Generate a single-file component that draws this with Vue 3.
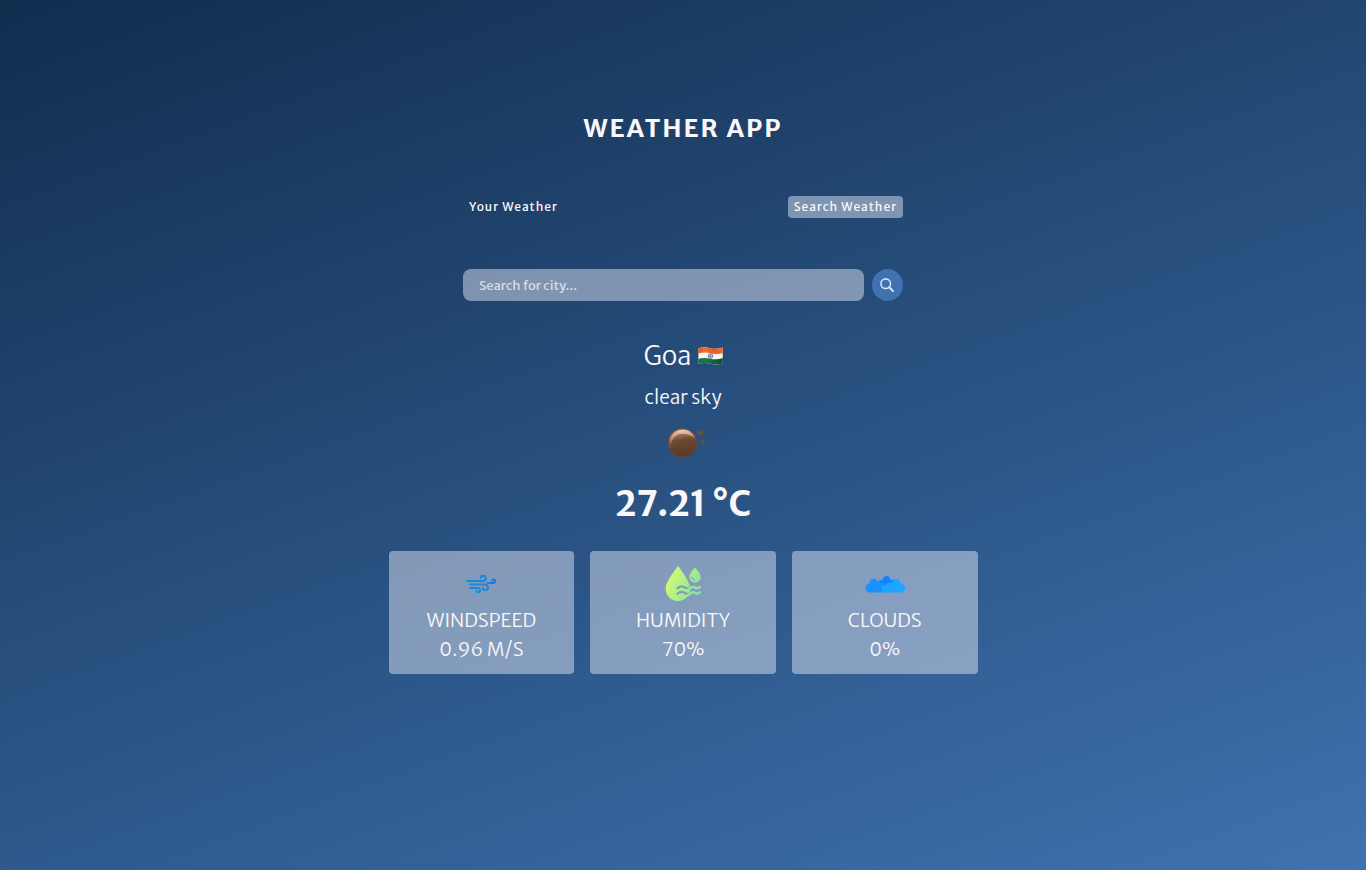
<script setup>
import { ref } from 'vue'

const city = ref('')
const tab = ref('search')
const tabs = [
  { id: 'your', label: 'Your Weather' },
  { id: 'search', label: 'Search Weather' },
]
</script>

<template>
  <main class="wrapper">
    <h1>WEATHER APP</h1>
    <nav class="tabs">
      <button
        v-for="t in tabs"
        :key="t.id"
        type="button"
        class="tab"
        :class="{ current: tab === t.id }"
        @click="tab = t.id"
      >{{ t.label }}</button>
    </nav>
    <form class="search" @submit.prevent>
      <input v-model="city" type="text" aria-label="Search for city" placeholder="Search for city..." />
      <button type="submit" aria-label="Search">
        <svg width="15" height="14" viewBox="0 0 15 14" fill="none" stroke="#dbe2ef" aria-hidden="true">
          <circle cx="5.7" cy="5.7" r="4.8" stroke-width="1.6" />
          <path d="M9.3 9.3 13 13" stroke-width="2" stroke-linecap="round" />
        </svg>
      </button>
    </form>

    <section class="info">
      <div class="name">
        <p>Goa</p>
        <svg width="25" height="20" viewBox="0 0 25 20" role="img" aria-label="India">
          <defs>
            <clipPath id="flagShape">
              <path d="M.4 2.200C4 .8 8.500 1.200 12.500 2.200S20.500 2.900 24.700 1.600V17.300C20.500 19 16.500 18.600 12.500 17.700S4.500 16.600 .4 18Z" />
            </clipPath>
            <linearGradient id="flagTop"><stop stop-color="#e35420" /><stop offset=".3" stop-color="#f36c33" /><stop offset=".6" stop-color="#e85a1c" /><stop offset="1" stop-color="#f4692a" /></linearGradient>
            <linearGradient id="flagBase"><stop stop-color="#17693c" /><stop offset=".3" stop-color="#1c7846" /><stop offset="1" stop-color="#0b4d27" /></linearGradient>
          </defs>
          <g clip-path="url(#flagShape)">
            <rect width="25" height="20" fill="#f6f4f5" />
            <path d="M0 0H25V7C20.500 8.200 16.500 8.100 12.500 7.200S4.500 6.200 0 7.500Z" fill="url(#flagTop)" />
            <path d="M0 13C4.500 11.700 8.500 11.900 12.500 12.800S20.500 13.500 25 12.100V20H0Z" fill="url(#flagBase)" />
          </g>
          <circle cx="12.500" cy="10" r="2.300" fill="#c6c6df" stroke="#625e9a" stroke-width=".8" />
          <circle cx="12.500" cy="10" r=".8" fill="#50508c" />
        </svg>
      </div>
      <p class="desc">clear sky</p>
      <svg class="moon" width="50" height="50" viewBox="0 0 50 50" role="img" aria-label="Clear night">
        <defs>
          <linearGradient id="moonFill" x1=".35" y1="0" x2=".5" y2="1">
            <stop offset="0" stop-color="#b38163" />
            <stop offset=".25" stop-color="#9a6849" />
            <stop offset=".4" stop-color="#6c4931" />
            <stop offset="1" stop-color="#583a27" />
          </linearGradient>
          <linearGradient id="moonShine" x1=".4" y1="0" x2=".5" y2="1">
            <stop offset="0" stop-color="#f1cfbd" />
            <stop offset=".45" stop-color="#c39a82" stop-opacity=".7" />
            <stop offset="1" stop-color="#805638" stop-opacity="0" />
          </linearGradient>
          <filter id="moonSoft"><feGaussianBlur stdDeviation=".6" /></filter>
        </defs>
        <circle cx="24.500" cy="25" r="15" fill="#584a49" />
        <circle cx="24.500" cy="25" r="14" fill="url(#moonFill)" />
        <path d="M12.500 32C9 21 15 12 25 11.700 31 12 35.500 15.500 37 20.500 31 15.500 27 16 22 16 16 17 12.500 23 12.500 32Z" fill="url(#moonShine)" filter="url(#moonSoft)" />
        <path d="m42.300 11 1.200 2.500 2.900.1-2.200 2 .9 2.800-2.800-1.500-2.800 1.500.8-2.800-2.100-2.100 2.800-.1ZM44.700 20.500l.9 2.200 2.500.1-1.800 1.700.7 2.400-2.300-1.200-2.200 1.200.5-2.500-1.800-1.700 2.500-.1Z" fill="#66503f" />
      </svg>
      <p class="temp">27.21 °C</p>
    </section>

    <section class="cards">
      <div class="card">
        <svg width="40" height="40" viewBox="0 0 40 40" fill="none" stroke-width="2" stroke-linecap="round" aria-hidden="true">
          <defs>
            <linearGradient id="wind" gradientUnits="userSpaceOnUse" x1="4" x2="35" y1="20" y2="20">
              <stop stop-color="#0794d8" /><stop offset=".45" stop-color="#168bdc" /><stop offset="1" stop-color="#2774d3" />
            </linearGradient>
          </defs>
          <g stroke="url(#wind)">
            <path d="M6 17.100H21.500C26 17.100 25.600 11.700 22.300 11.700 20.400 11.700 19.500 12.800 19.900 14" />
            <path d="M8.500 20.600H23.500C28.700 20.600 27.700 26.500 24 26.200 22.300 26.100 21.700 25 22 23.900" />
            <path d="M9 24H16.500C20 24 19.700 28.200 17.400 28.200 16.100 28.200 15.500 27.400 15.700 26.600" />
            <path d="M26.500 19.100H31.600C35.300 19.100 34.700 15.500 32.600 15.500 31.400 15.500 30.800 16.200 31.100 17" />
          </g>
        </svg>
        <p>WINDSPEED</p>
        <p>0.96 M/S</p>
      </div>
      <div class="card">
        <svg width="40" height="40" viewBox="0 0 40 40" aria-hidden="true">
          <defs>
            <linearGradient id="wet" gradientUnits="userSpaceOnUse" x1="5" y1="12" x2="37" y2="28">
              <stop stop-color="#d3f970" /><stop offset="1" stop-color="#83e4a3" />
            </linearGradient>
          </defs>
          <path d="M15.200 2C18 6 26.500 17 27.200 23.500 28 31 22 37 15 37S2.600 31.500 2.600 24.500C2.600 18 11 7.500 15.200 2Z" fill="url(#wet)" />
          <g fill="none" stroke="#849bbb" stroke-width="2.300" stroke-linecap="round">
            <path d="M14.500 24.200C17 22 19.300 21.600 22 23.600S26.500 24.300 28.500 22.800M14.500 29.700C17 27.500 19.300 27.100 22 29.100S26.500 29.800 28.500 28.300" />
          </g>
          <path d="M31.800 3.200C34 6.200 37.700 9.500 37.700 13 37.700 16.200 35.200 18.500 32 18.500S26.500 16.200 26.500 13C26.500 9.500 29.800 6.200 31.800 3.200Z" fill="url(#wet)" />
          <path d="M28.700 13C28.800 14.700 30 15.800 31.600 16" fill="none" stroke="#7594b4" stroke-linecap="round" />
          <g fill="none" stroke="url(#wet)" stroke-width="2.500" stroke-linecap="round">
            <path d="M24 26.200C26.800 25.800 27.500 21.800 31.500 23.300 34 25.200 35.200 24.500 36.800 23M24 31.500C26.800 31.100 27.500 27.100 31.500 28.600 34 30.500 35.200 29.800 36.800 28.300" />
          </g>
        </svg>
        <p>HUMIDITY</p>
        <p>70%</p>
      </div>
      <div class="card">
        <svg width="40" height="40" viewBox="0 0 40 40" aria-hidden="true">
          <path d="M13 27V18.500C13.300 16.400 16 15.500 17.500 16.300 17.500 13.300 19.300 12 21.500 12S25.500 13.600 25.400 16C27.700 14.800 30.500 16.500 30.300 19L28 27Z" fill="#1282ff" />
          <path d="M5 28.500C-.6 28.500-1.500 20.300 4.500 19.200 4.200 16 6.200 14.400 9 14.700 11.200 14.800 12.700 16.700 12.600 18.600 15.500 17.800 19 20 19.500 23L20 28.500Z" fill="#1792ff" />
          <path d="M20 28.500C15 28.300 15.500 20.800 20.500 21 22 18.300 25 17.600 27.200 18.800 27.700 16.300 29.500 14.800 31.800 15 34.500 15.200 36 17.500 35.500 20 41.800 20.500 41.700 28.500 35.800 28.500Z" fill="#1da5ff" />
        </svg>
        <p>CLOUDS</p>
        <p>0%</p>
      </div>
    </section>
  </main>
</template>

<style>
body { margin: 0; }
</style>

<style scoped>
* { box-sizing: border-box; margin: 0; }
.wrapper {
  min-height: 100vh;
  padding: 104px 16px 64px;
  display: flex;
  flex-direction: column;
  align-items: center;
  background: linear-gradient(160deg, #112d4e 0%, #3f72af 100%);
  color: #f9f7f7;
  font-family: "Merriweather Sans", "Noto Sans", sans-serif;
  font-weight: 300;
}
h1 {
  font-size: 25px;
  line-height: 48px;
  font-weight: 700;
  letter-spacing: 2px;
}
button, input { font: inherit; color: inherit; border: 0; }
button { cursor: pointer; }
.tabs {
  width: 100%;
  max-width: 440px;
  margin-top: 44px;
  display: flex;
  justify-content: space-between;
}
.tab {
  padding: 0 6px;
  height: 22px;
  border-radius: 4px;
  background: transparent;
  font-size: 12px;
  line-height: 20px;
  font-weight: 500;
  letter-spacing: 1px;
}
.current { background: rgba(219, 226, 239, 0.5); }
.search {
  width: 100%;
  max-width: 440px;
  margin-top: 51px;
  display: flex;
  gap: 8px;
}
.search input {
  flex: 1;
  min-width: 0;
  height: 32px;
  padding: 0 16px;
  border-radius: 8px;
  background: rgba(219, 226, 239, 0.5);
  font-size: 13px;
  font-weight: 400;
  outline: none;
}
.search input::placeholder { color: rgba(249, 247, 247, 0.75); opacity: 1; }
.search button {
  width: 31px;
  height: 32px;
  padding: 0;
  display: grid;
  place-items: center;
  border-radius: 50%;
  background: #3f72af;
}
.info {
  margin-top: 35px;
  display: flex;
  flex-direction: column;
  align-items: center;
}
.name {
  display: flex;
  align-items: center;
  gap: 6px;
  font-size: 26px;
  line-height: 40px;
}
.desc {
  margin-top: 5px;
  font-size: 19px;
  line-height: 32px;
}
.moon { margin-top: 5px; }
.temp {
  margin-top: 9px;
  font-size: 35px;
  line-height: 54px;
  font-weight: 700;
}
.cards {
  width: 100%;
  max-width: 589px;
  margin-top: 20px;
  display: grid;
  grid-template-columns: repeat(3, 1fr);
  gap: 16px;
}
.card {
  padding: 13px 12px 10px;
  display: flex;
  flex-direction: column;
  align-items: center;
  border-radius: 4px;
  background: rgba(219, 226, 239, 0.5);
  font-size: 19px;
  line-height: 29px;
}
.card svg { margin-bottom: 2px; }
</style>
